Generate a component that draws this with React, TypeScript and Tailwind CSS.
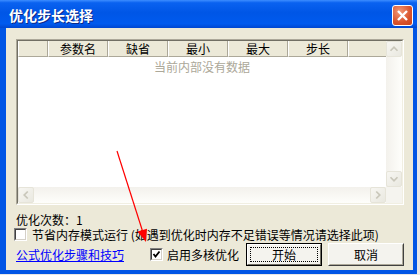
import React from 'react';

const FONT = "font-['Noto_Sans_CJK_SC','Liberation_Sans',sans-serif]";

const Chevron = ({ dir }: { dir: 'up' | 'down' | 'left' | 'right' }) => {
  const paths: Record<string, string> = {
    up: 'M4 10 L8 6 L12 10',
    down: 'M4 6 L8 10 L12 6',
    left: 'M10 4 L6 8 L10 12',
    right: 'M6 4 L10 8 L6 12',
  };
  return (
    <svg width="16" height="16" viewBox="0 0 16 16">
      <path d={paths[dir]} fill="none" stroke="#c9c7ba" strokeWidth="2" />
    </svg>
  );
};

const ScrollButton = ({ dir }: { dir: 'up' | 'down' | 'left' | 'right' }) => (
  <div className="w-[16px] h-[16px] shrink-0 rounded-[2px] border border-[#e6e4d9] bg-[linear-gradient(135deg,#f7f6f2,#e9e8e0)] flex items-center justify-center">
    <Chevron dir={dir} />
  </div>
);

const Checkbox = ({ checked }: { checked?: boolean }) => (
  <div className="w-[13px] h-[13px] shrink-0 border border-t-[#808080] border-l-[#808080] border-r-white border-b-white">
    <div className="w-full h-full border border-t-[#404040] border-l-[#404040] border-r-[#d4d0c8] border-b-[#d4d0c8] bg-white flex items-center justify-center">
      {checked && (
        <svg width="9" height="9" viewBox="0 0 9 9">
          <path d="M1.5 4 L3.5 6.5 L7.5 1.5" fill="none" stroke="#000" strokeWidth="1.8" />
        </svg>
      )}
    </div>
  </div>
);

const columns = [
  { label: '', w: 'w-[30px]' },
  { label: '参数名', w: 'w-[60px]' },
  { label: '缺省', w: 'w-[60px]' },
  { label: '最小', w: 'w-[60px]' },
  { label: '最大', w: 'w-[60px]' },
  { label: '步长', w: 'w-[60px]' },
];

export default function App() {
  return (
    <div className={`relative w-[420px] h-[275px] overflow-hidden bg-[#e6e6e6] ${FONT}`}>
      <div className="w-[417px] h-[274px] flex flex-col bg-[#0055e5]">
        {/* Title bar */}
        <div className="h-[28px] shrink-0 flex items-center justify-between pl-[9px] pr-[4px] pt-[2px] bg-[linear-gradient(to_bottom,#3d8dff_0%,#0a62f0_10%,#0056e6_45%,#005aee_85%,#0047d0_100%)]">
          <span className="text-[14px] font-bold leading-[14px] text-white [text-shadow:1px_1px_#0b2a8a]">
            优化步长选择
          </span>
          <div className="w-[21px] h-[21px] rounded-[3px] border border-white bg-[radial-gradient(circle_at_35%_30%,#f39a78,#d9532c_60%,#c8431c)] flex items-center justify-center">
            <svg width="19" height="19" viewBox="0 0 19 19">
              <path d="M5 5 L14 14 M14 5 L5 14" stroke="#fff" strokeWidth="2.4" />
            </svg>
          </div>
        </div>

        {/* Body */}
        <div className="flex-1 ml-[6px] mr-[4px] mb-[4px] bg-[#ece9d8] pl-[10px] pr-[9px] pt-[11px] flex flex-col text-[12px] leading-[14px] text-black">
          {/* List view */}
          <div className="h-[166px] shrink-0 border border-t-[#aca899] border-l-[#aca899] border-r-white border-b-white">
            <div className="h-full flex flex-col border border-t-[#716f64] border-l-[#716f64] border-r-[#f1efe2] border-b-[#f1efe2] bg-white">
              <div className="flex-1 flex min-h-0">
                <div className="flex-1 flex flex-col">
                  <div className="h-[16px] flex bg-[#ece9d8]">
                    {columns.map((c, i) => (
                      <div
                        key={i}
                        className={`${c.w} shrink-0 border-l border-l-white border-r border-r-[#aca899] border-b border-b-[#aca899] flex items-center justify-center leading-[12px]`}
                      >
                        {c.label}
                      </div>
                    ))}
                    <div className="flex-1 border-l border-l-white border-b border-b-[#aca899]" />
                  </div>
                  <div className="pt-[3px] text-center text-[#aca899]">当前内部没有数据</div>
                </div>
                <div className="w-[16px] flex flex-col bg-[linear-gradient(to_right,#f3f1ec,#fefefb)]">
                  <ScrollButton dir="up" />
                  <div className="flex-1" />
                  <ScrollButton dir="down" />
                </div>
              </div>
              <div className="h-[16px] flex">
                <div className="flex-1 flex bg-[linear-gradient(to_bottom,#f3f1ec,#fefefb)]">
                  <ScrollButton dir="left" />
                  <div className="flex-1" />
                  <ScrollButton dir="right" />
                </div>
                <div className="w-[16px] bg-[#f5f4ef]" />
              </div>
            </div>
          </div>

          <div className="mt-[8px] h-[14px] leading-[13px]">优化次数：1</div>

          <div className="mt-[1px] h-[13px] flex items-center -ml-[2px]">
            <Checkbox />
            <span className="ml-[5px] whitespace-nowrap leading-[13px]">
              节省内存模式运行 (如遇到优化时内存不足错误等情况请选择此项)
            </span>
          </div>

          <div className="mt-[2px] h-[23px] flex items-center">
            <span className="w-[108px] shrink-0 text-[#0000ff] underline whitespace-nowrap">公式优化步骤和技巧</span>
            <div className="ml-[26px] flex items-center">
              <Checkbox checked />
              <span className="ml-[4px] w-[72px] whitespace-nowrap">启用多核优化</span>
            </div>
            <div className="ml-[7px] w-[76px] h-[23px] border border-black">
              <div className="h-full border border-t-white border-l-white border-r-[#716f64] border-b-[#716f64] bg-[#f4f3ee] p-[2px]">
                <div className="h-full border border-dotted border-black flex items-center justify-center">开始</div>
              </div>
            </div>
            <div className="ml-[6px] w-[76px] h-[23px] border border-t-white border-l-white border-r-[#404040] border-b-[#404040]">
              <div className="h-full border border-t-[#f4f3ee] border-l-[#f4f3ee] border-r-[#aca899] border-b-[#aca899] bg-[#f4f3ee] flex items-center justify-center">
                取消
              </div>
            </div>
          </div>
        </div>
      </div>

      {/* Red annotation arrow */}
      <svg className="absolute left-0 top-0 pointer-events-none" width="420" height="275" viewBox="0 0 420 275">
        <line x1="117" y1="151" x2="142.5" y2="231" stroke="#ff0000" strokeWidth="1.2" />
        <polygon points="137.5,231.5 147,228.8 146,242" fill="#ff0000" />
      </svg>
    </div>
  );
}
